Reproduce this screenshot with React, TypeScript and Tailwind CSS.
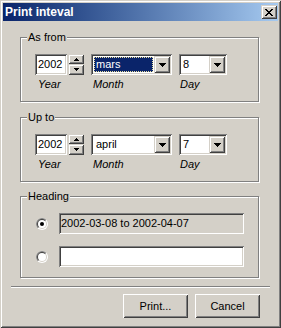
import React from "react";

const sunken =
  "shadow-[inset_1px_1px_0_#808080,inset_-1px_-1px_0_#ffffff,inset_2px_2px_0_#404040,inset_-2px_-2px_0_#d4d0c8]";
const raisedLight =
  "shadow-[inset_1px_1px_0_#d4d0c8,inset_-1px_-1px_0_#404040,inset_2px_2px_0_#ffffff,inset_-2px_-2px_0_#808080]";
const raisedBtn =
  "shadow-[inset_1px_1px_0_#ffffff,inset_-1px_-1px_0_#404040,inset_2px_2px_0_#d4d0c8,inset_-2px_-2px_0_#808080]";

function ArrowDown() {
  return (
    <svg width="7" height="4" shapeRendering="crispEdges">
      <path d="M0 0h7v1h-1v1h-1v1h-1v1h-1v-1h-1v-1h-1v-1h-1z" fill="#000" />
    </svg>
  );
}

function SmallUp() {
  return (
    <svg width="5" height="3" shapeRendering="crispEdges">
      <path d="M2 0h1v1h1v1h1v1h-5v-1h1v-1h1z" fill="#000" />
    </svg>
  );
}

function SmallDown() {
  return (
    <svg width="5" height="3" shapeRendering="crispEdges">
      <path d="M0 0h5v1h-1v1h-1v1h-1v-1h-1v-1h-1z" fill="#000" />
    </svg>
  );
}

function CloseGlyph() {
  const rows = [
    "XX....XX",
    ".XX..XX.",
    "..XXXX..",
    "...XX...",
    "..XXXX..",
    ".XX..XX.",
    "XX....XX",
  ];
  const rects: React.ReactNode[] = [];
  rows.forEach((r, y) =>
    r.split("").forEach((c, x) => {
      if (c === "X") rects.push(<rect key={`${x}-${y}`} x={x} y={y} width={1} height={1} fill="#000" />);
    })
  );
  return (
    <svg width="8" height="7" shapeRendering="crispEdges">
      {rects}
    </svg>
  );
}

function halfDisc(r: number) {
  const k = r * 0.7071;
  return `M${6 - k} ${6 + k} A${r} ${r} 0 0 1 ${6 + k} ${6 - k} Z`;
}

function Radio({ checked }: { checked?: boolean }) {
  return (
    <svg width="12" height="12" className="shrink-0">
      <circle cx="6" cy="6" r="6" fill="#ffffff" />
      <path d={halfDisc(6)} fill="#808080" />
      <circle cx="6" cy="6" r="5" fill="#d4d0c8" />
      <path d={halfDisc(5)} fill="#404040" />
      <circle cx="6" cy="6" r="4" fill="#ffffff" />
      {checked && <circle cx="6" cy="6" r="2" fill="#000" />}
    </svg>
  );
}

function Group({
  label,
  className,
  children,
}: {
  label: string;
  className: string;
  children: React.ReactNode;
}) {
  return (
    <div
      className={`relative w-[239px] border border-[#808080] shadow-[inset_1px_1px_0_#ffffff,1px_1px_0_#ffffff] ${className}`}
    >
      <span className="absolute left-[6px] top-[-7px] px-[1px] bg-[#d4d0c8] text-[11px] leading-[13px]">
        {label}
      </span>
      {children}
    </div>
  );
}

function DateRow({
  month,
  day,
  selected,
}: {
  month: string;
  day: string;
  selected?: boolean;
}) {
  return (
    <div className="flex gap-[7px] items-start">
      <div className="w-[49px] flex flex-col">
        <div className="flex gap-[1px]">
          <div className={`w-[32px] h-[21px] bg-white ${sunken} pl-[3px] flex items-center text-[11px]`}>2002</div>
          <div className="w-[16px] flex flex-col">
            <div className={`h-[10px] bg-[#d4d0c8] ${raisedLight} flex items-center justify-center`}>
              <SmallUp />
            </div>
            <div className={`h-[11px] bg-[#d4d0c8] ${raisedLight} flex items-center justify-center`}>
              <SmallDown />
            </div>
          </div>
        </div>
        <span className="mt-[3px] pl-[3px] italic text-[11px] leading-[13px]">Year</span>
      </div>
      <div className="w-[81px] flex flex-col">
        <div className={`h-[21px] bg-white ${sunken} p-[2px] flex`}>
          <div className="flex-1 p-[1px] flex">
            {selected ? (
              <div className="flex-1 bg-[#0a246a] border border-dotted border-[#e8dfa0] text-white text-[11px] pl-[1px] flex items-center">
                {month}
              </div>
            ) : (
              <div className="flex-1 text-[11px] pl-[2px] flex items-center">{month}</div>
            )}
          </div>
          <div className={`w-[16px] h-[17px] bg-[#d4d0c8] ${raisedLight} flex items-center justify-center`}>
            <ArrowDown />
          </div>
        </div>
        <span className="mt-[3px] pl-[2px] italic text-[11px] leading-[13px]">Month</span>
      </div>
      <div className="w-[48px] flex flex-col">
        <div className={`h-[21px] bg-white ${sunken} p-[2px] flex`}>
          <div className="flex-1 pl-[2px] text-[11px] flex items-center">{day}</div>
          <div className={`w-[16px] h-[17px] bg-[#d4d0c8] ${raisedLight} flex items-center justify-center`}>
            <ArrowDown />
          </div>
        </div>
        <span className="mt-[3px] pl-[1px] italic text-[11px] leading-[13px]">Day</span>
      </div>
    </div>
  );
}

export default function App() {
  return (
    <div
      className={`w-[281px] h-[328px] bg-[#d4d0c8] p-[3px] flex flex-col text-black font-['Liberation_Sans',Arial,sans-serif] shadow-[inset_1px_1px_0_#d4d0c8,inset_-1px_-1px_0_#404040,inset_2px_2px_0_#ffffff,inset_-2px_-2px_0_#808080]`}
    >
      <div className="h-[18px] shrink-0 flex items-center justify-between bg-linear-to-r from-[#0a246a] to-[#a6caf0] pl-[2px] pr-[1px]">
        <span className="text-white font-bold text-[12px] leading-none">Print inteval</span>
        <div className={`w-[16px] h-[14px] bg-[#d4d0c8] ${raisedLight} flex items-center justify-center`}>
          <CloseGlyph />
        </div>
      </div>

      <div className="flex flex-col pl-[17px]">
        <Group label="As from" className="mt-[16px] h-[65px] pt-[16px] pl-[14px]">
          <DateRow month="mars" day="8" selected />
        </Group>
        <Group label="Up to" className="mt-[15px] h-[65px] pt-[16px] pl-[14px]">
          <DateRow month="april" day="7" />
        </Group>
        <Group label="Heading" className="mt-[14px] h-[82px] pt-[16px] pl-[15px]">
          <div className="flex flex-col gap-[12px]">
            <div className="flex items-center gap-[11px]">
              <Radio checked />
              <div className={`w-[185px] h-[21px] bg-[#d4d0c8] ${sunken} pl-[2px] flex items-center text-[11px]`}>
                2002-03-08 to 2002-04-07
              </div>
            </div>
            <div className="flex items-center gap-[11px]">
              <Radio />
              <div className={`w-[185px] h-[21px] bg-white ${sunken}`} />
            </div>
          </div>
        </Group>
      </div>

      <div className="mt-[8px] ml-[8px] w-[259px] flex flex-col">
        <div className="h-px bg-[#808080]" />
        <div className="h-px bg-white" />
      </div>

      <div className="mt-[6px] pl-[120px] flex gap-[7px]">
        <button className={`w-[65px] h-[24px] bg-[#d4d0c8] ${raisedBtn} text-[11px] flex items-center justify-center`}>
          Print...
        </button>
        <button className={`w-[65px] h-[24px] bg-[#d4d0c8] ${raisedBtn} text-[11px] flex items-center justify-center`}>
          Cancel
        </button>
      </div>
    </div>
  );
}
